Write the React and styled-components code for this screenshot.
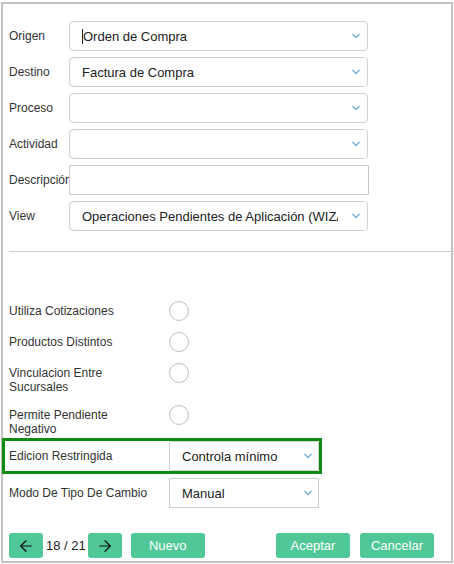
import React from 'react'
import styled, { createGlobalStyle } from 'styled-components'
import { ArrowLeft, ArrowRight } from 'lucide-react'

const GlobalStyle = createGlobalStyle`
    body {
        margin: 0;
        font-family: "Liberation Sans", Arial, sans-serif;
        background: #fff;
        color: #333;
    }
`
const Frame = styled.div`
    box-sizing: border-box;
    width: 452px;
    height: 561px;
    margin: 2px 0 0 1px;
    border: 2px solid #c2c2c2;
    padding: 17px 0 0 6px;
    display: flex;
    flex-direction: column;
    & > * {
        flex-shrink: 0;
    }
`
const Fields = styled.div`
    display: flex;
    flex-direction: column;
    gap: 6px;
`
const Row = styled.div`
    display: flex;
    align-items: center;
    height: 30px;
`
const Label = styled.div`
    width: 60px;
    flex: none;
    font-size: 12px;
    white-space: nowrap;
    overflow: hidden;
    color: #333;
`
const Select = styled.div`
    box-sizing: border-box;
    width: ${props => props.width || 299}px;
    height: 30px;
    border: 1px solid #cfcfcf;
    border-radius: ${props => props.radius ?? 4}px;
    background: #fff;
    display: flex;
    align-items: center;
    padding: 0 ${props => props.right || 6}px 0 12px;
    font-size: 13px;
    color: #222;
`
const Value = styled.div`
    flex: 1;
    white-space: nowrap;
    overflow: hidden;
    margin-right: ${props => props.gap || 0}px;
`
const Caret = styled.span`
    display: inline-block;
    width: 1px;
    height: 15px;
    background: #222;
    vertical-align: -3px;
`
const TextInput = styled.div`
    box-sizing: border-box;
    width: 300px;
    height: 30px;
    border: 1px solid #c8c8c8;
    border-radius: 1px;
    background: #fff;
`
const Divider = styled.div`
    height: 1px;
    background: #cccccc;
    margin: 20px -6px 0 0;
`
const Checks = styled.div`
    display: flex;
    flex-direction: column;
    gap: 11px;
    margin-top: 49px;
`
const CheckRow = styled.div`
    display: flex;
    align-items: flex-start;
`
const CheckLabel = styled.div`
    width: 130px;
    margin-right: 30px;
    padding-top: 3px;
    font-size: 12px;
    line-height: 14px;
    color: #333;
`
const Circle = styled.div`
    box-sizing: border-box;
    width: 20px;
    height: 20px;
    border: 1px solid #bdbdbd;
    border-radius: 50%;
    background: #fff;
`
const Lower = styled.div`
    display: flex;
    flex-direction: column;
    gap: 7px;
    margin-top: 5px;
`
const FormRow = styled.div`
    display: flex;
    align-items: center;
    height: 30px;
    width: 310px;
    margin-left: -4px;
    padding-left: 4px;
    outline: ${props => props.active ? '3px solid #108a10' : 'none'};
`
const WideLabel = styled(Label)`
    width: 160px;
`
const Footer = styled.div`
    display: flex;
    align-items: center;
    margin-top: 25px;
    padding-right: 17px;
`
const Button = styled.button`
    box-sizing: border-box;
    flex: none;
    height: 25px;
    width: ${props => props.width || 74}px;
    border: none;
    border-radius: 3px;
    background: #4fc796;
    color: #fff;
    font-family: "Liberation Sans", Arial, sans-serif;
    font-size: 13px;
    display: flex;
    align-items: center;
    justify-content: center;
    padding: 0;
    margin-left: ${props => props.ml || 0}px;
`
const Pager = styled.span`
    flex: none;
    white-space: nowrap;
    font-size: 13px;
    color: #222;
    margin: 0 2px 0 3px;
`
const Spacer = styled.div`
    flex: 1;
`

const Chevron = () => (
    <svg width="10" height="6" viewBox="0 0 10 6">
        <polyline points="1.5,1 5,4.5 8.5,1" fill="none" stroke="#72a8de" strokeWidth="1.3" />
    </svg>
)

const fields = [
    { label: 'Origen', value: 'Orden de Compra', caret: true },
    { label: 'Destino', value: 'Factura de Compra' },
    { label: 'Proceso', value: '' },
    { label: 'Actividad', value: '' },
    { label: 'Descripción', input: true },
    { label: 'View', value: 'Operaciones Pendientes de Aplicación (WIZARD)', gap: 13 },
]

const checks = ['Utiliza Cotizaciones', 'Productos Distintos', 'Vinculacion Entre Sucursales', 'Permite Pendiente Negativo']

const App = () => {
    return (
        <>
            <GlobalStyle />
            <Frame>
                <Fields>
                    {fields.map(f => (
                        <Row key={f.label}>
                            <Label>{f.label}</Label>
                            {f.input ? <TextInput /> : (
                                <Select>
                                    <Value gap={f.gap}>{f.caret ? <Caret /> : null}{f.value}</Value>
                                    <Chevron />
                                </Select>
                            )}
                        </Row>
                    ))}
                </Fields>
                <Divider />
                <Checks>
                    {checks.map(c => (
                        <CheckRow key={c}>
                            <CheckLabel>{c}</CheckLabel>
                            <Circle />
                        </CheckRow>
                    ))}
                </Checks>
                <Lower>
                    <FormRow active>
                        <WideLabel>Edicion Restringida</WideLabel>
                        <Select width={150} radius={1} right={5}>
                            <Value>Controla mínimo</Value>
                            <Chevron />
                        </Select>
                    </FormRow>
                    <FormRow>
                        <WideLabel>Modo De Tipo De Cambio</WideLabel>
                        <Select width={150} radius={1} right={5}>
                            <Value>Manual</Value>
                            <Chevron />
                        </Select>
                    </FormRow>
                </Lower>
                <Footer>
                    <Button width={34}><ArrowLeft size={18} color="#111" strokeWidth={1.6} /></Button>
                    <Pager>18 / 21</Pager>
                    <Button width={34}><ArrowRight size={18} color="#111" strokeWidth={1.6} /></Button>
                    <Button ml={9}>Nuevo</Button>
                    <Spacer />
                    <Button>Aceptar</Button>
                    <Button ml={10}>Cancelar</Button>
                </Footer>
            </Frame>
        </>
    )
}

export default App
